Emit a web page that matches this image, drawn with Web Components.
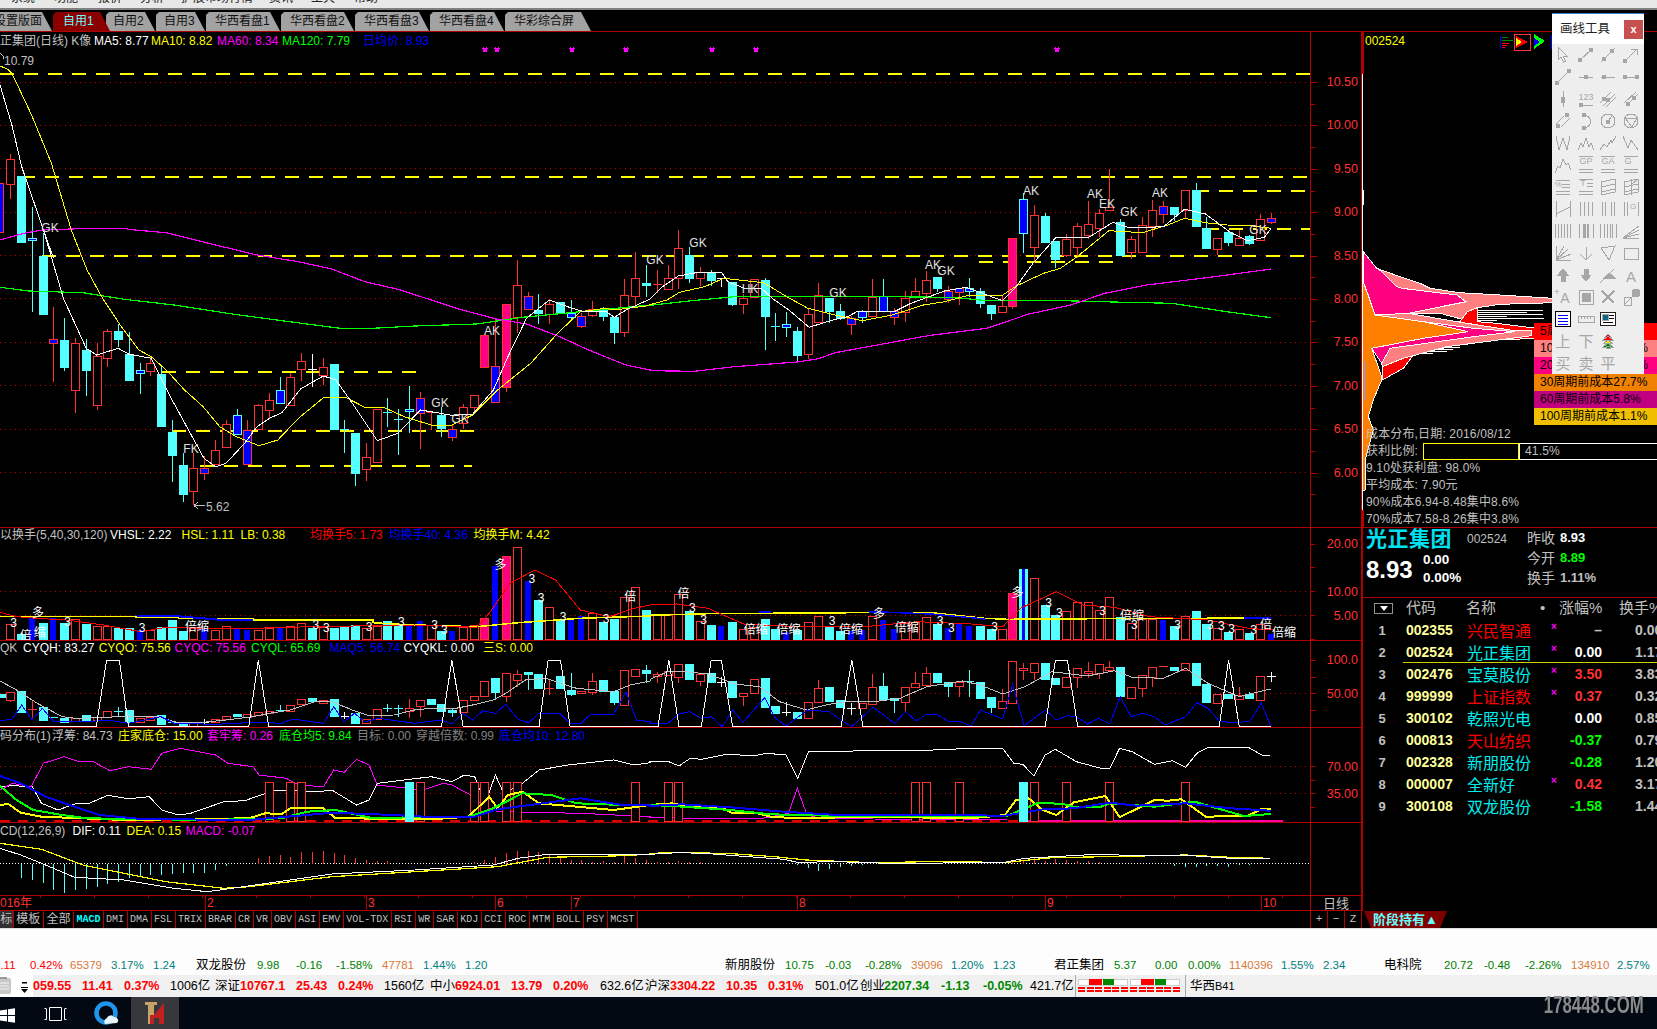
<!DOCTYPE html>
<html lang="zh">
<head>
<meta charset="utf-8">
<title>通达信 K线</title>
<style>
  html, body { margin: 0; padding: 0; background: #000; }
  body { font: 12px "Liberation Sans", "Noto Sans CJK SC", sans-serif; }
</style>
</head>
<body>
<tdx-app>
  <menu-strip></menu-strip>
  <tab-strip></tab-strip>
  <work-area>
    <div slot="left">
      <chart-pane name="main" top="32" h="496" ly="2">
        <lg-i w="94" c="#c0c0c0">正集团(日线) K像</lg-i>
        <lg-i w="57" c="#fff">MA5: 8.77</lg-i>
        <lg-i w="66" c="#ff0">MA10: 8.82</lg-i>
        <lg-i w="65" c="#f0f">MA60: 8.34</lg-i>
        <lg-i w="81" c="#0f0">MA120: 7.79</lg-i>
        <lg-i w="80" c="#00f">日均价: 8.93</lg-i>
      </chart-pane>
      <chart-pane name="vol" top="528" h="113" ly="0">
        <lg-i w="110" c="#c0c0c0">以换手(5,40,30,120)</lg-i>
        <lg-i w="71.6" c="#fff">VHSL: 2.22</lg-i>
        <lg-i w="59" c="#ff0">HSL: 1.11</lg-i>
        <lg-i w="69.5" c="#ff0">LB: 0.38</lg-i>
        <lg-i w="78.5" c="#f00">均换手5: 1.73</lg-i>
        <lg-i w="85" c="#00f">均换手40: 4.36</lg-i>
        <lg-i w="90" c="#ff0">均换手M: 4.42</lg-i>
      </chart-pane>
      <chart-pane name="qk" top="641" h="87" ly="0">
        <lg-i w="23" c="#c0c0c0">QK</lg-i>
        <lg-i w="75.7" c="#fff">CYQH: 83.27</lg-i>
        <lg-i w="75.8" c="#ff0">CYQO: 75.56</lg-i>
        <lg-i w="76.5" c="#f0f">CYQC: 75.56</lg-i>
        <lg-i w="78.6" c="#0f0">CYQL: 65.69</lg-i>
        <lg-i w="73.8" c="#00f">MAQ5: 56.74</lg-i>
        <lg-i w="79.6" c="#fff">CYQKL: 0.00</lg-i>
        <lg-i w="70" c="#ff0">三S: 0.00</lg-i>
      </chart-pane>
      <chart-pane name="chip" top="728" h="95" ly="1">
        <lg-i w="52" c="#c0c0c0">码分布(1)</lg-i>
        <lg-i w="66" c="#c0c0c0">浮筹: 84.73</lg-i>
        <lg-i w="89" c="#ff0">庄家底仓: 15.00</lg-i>
        <lg-i w="72" c="#f0f">套牢筹: 0.26</lg-i>
        <lg-i w="78" c="#0f0">底仓均5: 9.84</lg-i>
        <lg-i w="59" c="#808080">目标: 0.00</lg-i>
        <lg-i w="83" c="#808080">穿越倍数: 0.99</lg-i>
        <lg-i w="90" c="#00f">底仓均10: 12.80</lg-i>
      </chart-pane>
      <chart-pane name="macd" top="823" h="73" ly="1">
        <lg-i w="72.5" c="#c0c0c0">CD(12,26,9)</lg-i>
        <lg-i w="54" c="#fff">DIF: 0.11</lg-i>
        <lg-i w="59.2" c="#ff0">DEA: 0.15</lg-i>
        <lg-i w="90" c="#f0f">MACD: -0.07</lg-i>
      </chart-pane>
      <time-axis></time-axis>
      <formula-tabs></formula-tabs>
    </div>
    <div slot="right">
      <chip-panel></chip-panel>
      <quote-card></quote-card>
      <stock-list></stock-list>
      <hold-tab>阶段持有▲</hold-tab>
    </div>
  </work-area>
  <ticker-strip></ticker-strip>
  <status-strip></status-strip>
  <task-bar></task-bar>
  <draw-tools></draw-tools>
</tdx-app>

<script>
const FONT = '"Liberation Sans","Noto Sans CJK SC",sans-serif';
const LINE = '#b00000';
const RED = '#ff3232';
const CYAN = '#54ffff';

// zoom crop coords -> page coords
const pts = (sx, ox, oy, a) => {
  let s = '';
  for (let i = 0; i < a.length; i += 2) s += (ox + a[i] / sx).toFixed(1) + ',' + (oy + a[i + 1] / 3).toFixed(1) + ' ';
  return s;
};
const z1 = a => pts(2.53, 0, 0, a);
const z9 = a => pts(2.412, 0, 230, a);
const z10 = a => pts(2.376, 650, 160, a);
const z7 = a => pts(2.412, 0, 520, a);
const z8 = a => pts(2.24, 650, 520, a);
const poly = (p, c, w = 1) => `<polyline points="${p}" fill="none" stroke="${c}" stroke-width="${w}"/>`;
const cx = i => Math.round(10.3 + 10.775 * i);
const hl = (y, x1, x2, c, w, dash) => `<path d="M${x1} ${y}H${x2}" stroke="${c}" stroke-width="${w}" ${dash ? `stroke-dasharray="${dash}"` : ''} fill="none"/>`;
const dotted = (y, x2 = 1311) => hl(y + .5, 0, x2, '#c80000', 1, '1 4');
const label = (x, y, t, c = '#e0e0e0') => `<text x="${x.toFixed(1)}" y="${y.toFixed(1)}" fill="${c}" text-anchor="middle" dominant-baseline="central" font-size="12">${t}</text>`;
const axisText = (y, t) => `<text x="1358" y="${y}" fill="${RED}" text-anchor="end" dominant-baseline="central" font-size="12.5">${t}</text>`;

function candles(str, start, base) {
  return str.trim().split(/\s*,\s*/).map((e, k) => {
    const [t, a, b, hi, lo] = e.split(' ');
    const top = base + a / 3, bot = base + b / 3, h = hi ? base + hi / 3 : top, l = lo ? base + lo / 3 : bot;
    return candle(cx(start + k), t, top, bot, h, l);
  }).join('');
}
function candle(x, t, top, bot, h, l) {
  const c = { c: CYAN, B: CYAN, w: '#fff', r: RED, b: RED, p: RED }[t];
  const fill = { c: CYAN, B: '#00f', w: 'none', r: '#000', b: '#00f', p: '#ff0080' }[t];
  const px = x + .5;
  let s = `<path d="M${px} ${h}V${l}" stroke="${c}"/>`;
  top = Math.round(top) + .5; bot = Math.round(bot) + .5;
  if (bot - top < 2) s += `<path d="M${x - 4} ${top}h9" stroke="${t == 'c' || t == 'B' || t == 'w' ? c : RED}" stroke-width="1"/>`
    + (t == 'B' || t == 'b' ? `<rect x="${x - 2}" y="${top - 2}" width="5" height="4" fill="#00f"/>` : '');
  else s += `<rect x="${x - 4 + .5}" y="${top}" width="8" height="${bot - top}" fill="${fill}" stroke="${c}"/>`;
  return s;
}

const MAIN_HEAD =
  candle(-1, 'b', 183, 232, 183, 232) + candle(cx(0), 'r', 159, 184, 154, 199) +
  candle(cx(1), 'c', 176, 242, 176, 242) + candle(cx(2), 'B', 238, 240, 207, 312) + candle(cx(3), 'c', 256, 314, 233, 314);

const MAIN_1 = `b 328 338 232 455,c 330 411 265 422,r 340 479 325 548,c 360 420 328 497,r 378 524 340 540,r 304 383 297 410,c 304 327 282 350,c 372 450 306 452,B 420 430 400 492,r 400 422 380 438,
c 432 588 405 588,c 606 675 570 755,c 706 792 670 815,r 715 782 670 825,b 714 728 678 750,r 661 701 630 705,r 583 650 570 650,B 555 612 537 612,b 600 702 570 702,r 526 597 521 597,
r 511 539 490 568,B 480 520 442 520,r 442 524 430 524,r 394 416 368 452,w 418 418 372 470,r 412 434 384 465,c 402 596 402 596,c 598 598 570 670,c 609 728 609 768,r 682 716 640 752,
r 538 695 538 695,c 547 547 505 590,c 566 566 537 675,B 538 543 468 610,b 505 548 487 656,r 545 547 545 600,c 555 594 530 620,b 598 620 585 632,r 532 580 522 597,r 496 530 496 550,
p 316 410,b 408 515 265 515,p 223 470 223 485,r 166 261 90 310,b 198 236 186 238,c 240 248 192 282,r 222 251 208 282,c 216 250,B 250 262 210 270,b 258 287 250 295,
r 236 254 214 260,c 238 257 232 272,c 260 305 260 341,r 194 307 148 320,r 145 197 66 225,c 160 164 105 200`;
const MAIN_2 = `r 372 376 330 400,r 355 386 316 390,r 265 354 210 388,c 286 354 262 368,r 337 353 322 378,c 338 360 330 378,w 355 355 355 382,c 366 432 366 438,r 413 431 403 462,r 358 410 358 410,
c 360 468 354 570,c 497 497 460 542,B 492 500 456 530,c 513 585 500 610,r 463 581 448 597,r 406 485 370 490,c 414 453 414 490,c 453 474 432 480,b 474 491 468 525,B 453 470 450 490,
r 411 467 357 467,B 408 452 358 452,b 453 470 445 495,r 415 455 392 487,r 394 410 353 410,r 361 399 333 425,c 351 384 351 395,b 392 417 378 430,b 385 395 385 435,B 384 392 353 410,
c 392 429 385 444,c 435 459 435 480,r 439 455 405 455,p 235 437 235 447,B 118 220 100 278,r 166 260 135 310,c 168 245 158 245,c 243 297 243 323,r 237 286 222 290,r 199 261 188 295,
r 193 224 122 238,r 160 203 148 230,r 141 149 28 150,c 186 285 176 285,r 238 275 228 298,r 196 275 170 275,r 151 198 120 232,b 139 161 124 190,c 141 162 141 182,r 91 149 91 175,
c 91 197 70 202,c 205 263 172 265,r 235 268 235 286,c 216 245 216 258,r 235 256 210 258,c 228 248 225 255,r 176 239 162 239,b 175 185 160 192`;

const QK_1 = `r 515 540 515 545,c 513 575,r 568 570 540 595,c 560 600,c 592 595,c 595 607,r 593 602,c 586 600,r 590 600,r 572 590,c 573 573 562 590,c 570 605,r 595 605,r 590 600,c 584 612,c 605 605,c 610 620,r 610 620,w 607 607 597 615,r 596 605,
r 587 597,c 581 587,r 583 590,r 575 585,r 572 578,c 570 573 555 575,r 555 573,r 537 553,c 535 542,r 540 548,c 538 588,w 587 587 577 597,c 580 610,r 598 610,r 566 597,c 563 568 552 575,c 563 568 555 590,r 563 572 537 595,r 541 558 541 592,c 537 553,
c 553 572,c 570 575 565 590,r 541 577,r 527 540,r 484 527,c 473 515 473 540,r 460 527 460 545,r 463 480 450 500,c 457 462 457 510,c 462 503,r 505 507 480 525,c 468 505,c 510 523 460 527,r 513 520,r 484 517 460 525,c 480 512,c 513 545 513 555,r 449 555,r 447 467,c 449 460 435 490`;
const QK_2 = `r 462 468 455 490,r 452 466,r 433 472 433 490,c 432 478,r 462 482 462 498,c 460 485,w 487 487 470 500,c 483 530,r 520 528 520 557,r 478 520,c 475 560,c 558 578,w 577 577 545 588,c 576 593,r 547 595,r 505 547 480 547,c 502 542,c 540 562,w 565 565 550 585,r 550 563,
r 500 553 463 553,c 498 538 460 538,c 534 540 534 578,r 500 545 500 572,r 490 502 455 502,r 460 496 440 496,c 458 487,c 487 497 487 530,r 485 497 485 530,c 484 486 450 530,c 487 533,c 532 562 532 578,r 542 565 508 565,r 424 550,r 445 451 430 480,r 430 455 430 480,c 430 476,c 475 492,r 470 500,r 445 470 445 505,
r 452 458 425 475,r 432 458 432 478,r 442 450 423 450,c 442 527,r 502 533,r 466 505 466 530,r 442 470 442 500,r 438 441,c 440 450,r 430 450,c 430 495,c 492 545,r 522 548,c 522 533,r 524 538 502 538,c 522 533 515 538,r 468 540,w 468 468 455 487`;

// volume bar tops (i -> type top), 3x crop y
const VOL = `r 313,c 340,b 285,c 305,b 290,c 307,r 298,c 308,r 318,r 318,c 320,c 320,b 328,r 330,c 318,c 296,c 330,r 320,b 322,r 330,r 318,b 322,b 328,r 330,r 325,b 322,r 317,r 310,c 320,r 320,c 320,c 315,c 312,r 325,r 318,c 300,c 315,b 315,b 300,r 315,c 330,b 330,r 322,r 315,p 295,b 135,p 108,r 80,b 180,c 238,r 260,c 295,b 295,b 285,r 280,c 302,c 295,r 232,r 200,c 267,
r 285,r 285,r 222,c 270,r 303,c 312,b 316,c 303,r 328,r 320,c 295,c 325,b 333,c 327,r 305,r 288,c 315,c 330,b 330,b 326,r 288,b 297,b 325,r 310,r 305,r 292,c 310,b 322,b 310,b 315,c 315,c 325,r 328,p 220,B 144,r 175,c 252,c 282,r 273,r 245,r 245,r 270,r 232,c 288,r 310,r 297,r 297,b 298,c 315,r 288,c 270,c 308,r 325,c 333,r 328,c 335,r 313,b 340`;

const PANES = {
  main() {
    let s = '';
    [82, 125.5, 168, 212, 255.5, 298, 342, 385, 429, 472.5].forEach(y => s += dotted(Math.floor(y)));
    ['10.50', '10.00', '9.50', '9.00', '8.50', '8.00', '7.50', '7.00', '6.50', '6.00'].forEach((t, k) => {
      const y = 82 + k * 43.4;
      s += axisText(y, t) + hl(Math.round(y) + .5, 1311, 1317, LINE, 1) + hl(Math.round(y + 21.7) + .5, 1311, 1315, LINE, 1);
    });
    const d = '14 10';
    s += hl(74, 0, 1311, '#ff0', 2, d) + hl(177, 21, 1311, '#ff0', 2, d) + hl(256, 42, 1311, '#ff0', 2, d) +
      hl(191, 1195, 1311, '#ff0', 2, d) + hl(229, 1205, 1311, '#ff0', 2, d) + hl(262, 979, 1117, '#ff0', 2, d) +
      hl(372, 162, 419, '#ff0', 2, d) + hl(431, 172, 477, '#ff0', 2, d) + hl(466, 200, 472, '#ff0', 2, d);
    s += MAIN_HEAD + candles(MAIN_1, 4, 230) + candles(MAIN_2, 60, 160);
    s += poly(z9([0, 172, 70, 183, 200, 188, 300, 208, 420, 225, 560, 252, 680, 272, 820, 295, 900, 295, 1000, 288, 1150, 282, 1260, 262, 1400, 245, 1568, 225]) +
      z10([0, 436, 100, 422, 200, 410, 560, 410, 720, 412, 800, 422, 980, 422, 1130, 427, 1240, 430, 1370, 455, 1476, 473]), '#0f0', 1.2);
    s += poly(z1([0, 720, 60, 700, 107, 690, 230, 685, 310, 685]) +
      z9([325, 0, 400, 8, 520, 45, 620, 75, 720, 95, 800, 117, 880, 155, 960, 178, 1040, 210, 1100, 235, 1200, 268, 1270, 282, 1350, 320, 1420, 360, 1510, 405, 1568, 420]) +
      z10([0, 632, 105, 634, 200, 620, 350, 606, 400, 596, 440, 578, 570, 548, 660, 527, 800, 505, 900, 462, 1000, 435, 1080, 400, 1180, 375, 1330, 352, 1476, 327]), '#f0f', 1.2);
    s += poly(z1([0, 198, 20, 208, 30, 220, 80, 345, 130, 490]) +
      z9([172, 0, 210, 120, 245, 200, 290, 285, 335, 360, 365, 380, 405, 425, 445, 480, 490, 530, 530, 590, 570, 620, 625, 647, 670, 630, 720, 565, 780, 503, 835, 503, 880, 532, 925, 532, 975, 560, 1040, 585, 1090, 585, 1140, 555, 1200, 480, 1280, 400, 1345, 310, 1400, 245, 1460, 235, 1482, 240, 1559, 228]) +
      z10([0, 434, 40, 420, 70, 397, 130, 380, 175, 355, 270, 368, 325, 410, 375, 445, 440, 465, 505, 482, 575, 465, 650, 435, 700, 425, 760, 405, 838, 405, 870, 378, 935, 340, 975, 325, 1015, 290, 1090, 212, 1170, 218, 1230, 195, 1270, 175, 1320, 188, 1370, 195, 1420, 196, 1476, 205]), '#ff0');
    s += poly(z1([0, 255, 30, 375, 55, 500, 107, 680, 135, 775]) +
      z9([105, 0, 153, 205, 208, 355, 233, 375, 285, 355, 310, 372, 365, 385, 415, 510, 492, 685, 520, 710, 545, 700, 590, 640, 620, 590, 650, 565, 680, 548, 725, 477, 780, 438, 810, 450, 850, 520, 910, 632, 960, 610, 1014, 540, 1062, 550, 1090, 556, 1140, 553, 1190, 480, 1225, 380, 1270, 265, 1325, 210, 1380, 235, 1410, 245, 1460, 243, 1482, 262, 1510, 240, 1559, 212]) +
      z10([0, 418, 30, 380, 67, 348, 115, 337, 170, 337, 185, 365, 225, 385, 265, 385, 290, 415, 330, 450, 378, 502, 440, 478, 470, 470, 490, 456, 580, 455, 620, 430, 700, 393, 750, 382, 790, 400, 837, 422, 870, 380, 910, 310, 965, 232, 1040, 234, 1100, 187, 1140, 204, 1220, 200, 1270, 148, 1320, 162, 1380, 218, 1420, 242, 1460, 232, 1476, 205]), '#fff');
    [485, 497, 572, 626, 712, 756, 1057].forEach(x => s += `<path d="M${x - 2} 48l4 4M${x + 2} 48l-4 4" stroke="#f0f" stroke-width="1.5"/>`);
    [[50, 228, 'GK'], [191, 449, 'FK'], [440, 403, 'GK'], [460, 419, 'GK'], [492, 331, 'AK'], [655, 260, 'GK'], [698, 243, 'GK'], [750, 289, 'HK'], [838, 293, 'GK'], [933, 265, 'AK'], [946, 271, 'GK'], [1031, 191, 'AK'], [1095, 194, 'AK'], [1107, 204, 'EK'], [1129, 212, 'GK'], [1160, 193, 'AK'], [1258, 230, 'GK']]
      .forEach(l => s += label(l[0], l[1], l[2]));
    s += `<path d="M194 505.5h11M194 505.5l4-3M194 505.5l4 3" stroke="#c0c0c0" fill="none"/>` + `<text x="206" y="507" fill="#c0c0c0" dominant-baseline="central" font-size="12">5.62</text>`;
    s += `<path d="M0 53l3 3v3" stroke="#c0c0c0" fill="none"/><text x="4" y="61" fill="#c0c0c0" dominant-baseline="central" font-size="12">10.79</text>`;
    return s;
  },
  vol() {
    let s = dotted(591) + dotted(615);
    s += axisText(544, '20.00') + axisText(591.5, '10.00') + axisText(615.5, '5.00');
    [544, 567, 591, 615, 639].forEach(y => s += hl(y + .5, 1311, 1315, LINE, 1));
    VOL.trim().split(/\s*,\s*/).forEach((e, i) => {
      const [t, top] = e.split(' ');
      const x = cx(i), y = Math.round(520 + top / 3) + .5, h = 639.5 - y;
      if (t == 'c') s += `<rect x="${x - 4}" y="${y}" width="9" height="${h}" fill="${CYAN}"/>`;
      if (t == 'r') s += `<rect x="${x - 3.5}" y="${y}" width="8" height="${h}" fill="#000" stroke="${RED}"/>`;
      if (t == 'b') s += `<rect x="${x - 3}" y="${y}" width="6" height="${h}" fill="#00f"/>`;
      if (t == 'p') s += `<rect x="${x - 3.5}" y="${y}" width="8" height="${h}" fill="#ff0080" stroke="${RED}"/>`;
      if (t == 'B') s += `<rect x="${x - 4}" y="${y}" width="9" height="${h}" fill="${CYAN}"/><rect x="${x - 1}" y="${y}" width="3" height="${h}" fill="#00f"/>`;
    });
    s += poly(z7([0, 289, 325, 289, 330, 292, 430, 292, 430, 295, 610, 295, 610, 300, 900, 300, 900, 308, 980, 314, 1150, 320, 1250, 308, 1400, 295, 1568, 288]) + z8([0, 286, 130, 281, 460, 278, 630, 278, 750, 295, 800, 298, 1000, 296, 1390, 294]), '#ff0', 1.5);
    s += poly(z7([330, 289, 430, 289, 530, 299, 610, 299]), '#00f', 2) + poly(z8([245, 276, 270, 276]), '#00f', 2) + poly(z8([490, 276, 520, 276, 630, 282, 750, 297]), '#00f', 1.5) + poly(z8([1330, 294, 1390, 294]), '#00f', 2);
    s += poly(z7([0, 277, 40, 290, 90, 295, 160, 300, 250, 315, 340, 335, 400, 322, 550, 327, 750, 320, 1000, 315, 1150, 322, 1180, 280, 1230, 190, 1290, 150, 1340, 180, 1400, 270, 1470, 290, 1530, 265, 1568, 255]) +
      z8([0, 255, 60, 252, 130, 265, 210, 312, 330, 320, 480, 320, 600, 305, 720, 312, 790, 320, 830, 265, 910, 215, 970, 255, 1040, 262, 1120, 290, 1250, 300, 1340, 325, 1395, 330]), '#f00');
    const y = v => 520 + v / 3;
    [[33, 310, '3'], [92, 278, '多'], [62, 347, '倍'], [96, 340, '缩'], [163, 305, '3'], [343, 325, '3'], [475, 322, '倍缩'], [762, 315, '3'], [787, 325, '3'], [890, 322, '3'], [968, 305, '3'], [1048, 315, '3'], [1072, 330, '3'], [1207, 135, '多'], [1283, 178, '3'], [1305, 235, '3'], [1358, 290, '3'], [1462, 297, '3'], [1520, 232, '倍']]
      .forEach(l => s += label(l[0] / 2.412, y(l[1]), l[2], '#fff'));
    [[75, 222, '倍'], [95, 265, '3'], [120, 300, '3'], [237, 330, '倍缩'], [310, 330, '倍缩'], [408, 302, '3'], [450, 330, '倍缩'], [513, 282, '多'], [575, 325, '倍缩'], [650, 303, '3'], [675, 325, '3'], [772, 320, '3'], [823, 218, '多'], [893, 250, '3'], [917, 278, '3'], [1014, 272, '3'], [1080, 288, '倍缩'], [1085, 315, '3'], [1182, 315, '3'], [1255, 315, '3'], [1280, 318, '3'], [1303, 328, '3'], [1352, 330, '3'], [1380, 315, '倍'], [1420, 340, '倍缩']]
      .forEach(l => s += label(650 + l[0] / 2.24, y(l[1]), l[2], '#fff'));
    return s;
  },
  qk() {
    let s = dotted(693);
    s += axisText(660, '100.0') + axisText(693.5, '50.00');
    [660, 677, 693, 710].forEach(y => s += hl(y + .5, 1311, 1316, LINE, 1));
    s += candle(2, 'c', 694, 697, 694, 697) + candles(QK_1, 0, 520) + candles(QK_2, 60, 520);
    s += poly(z7([0, 483, 40, 510, 90, 550, 150, 590, 190, 596, 240, 592, 300, 590, 380, 590, 430, 608, 490, 607, 545, 600, 610, 590, 650, 580, 700, 570, 760, 545, 800, 545, 850, 570, 890, 587, 950, 585, 1000, 570, 1040, 565, 1100, 565, 1140, 555, 1190, 540, 1220, 520, 1270, 478, 1320, 476, 1390, 505, 1480, 515, 1520, 495, 1568, 483]) +
      z8([0, 478, 40, 455, 80, 455, 130, 462, 190, 492, 245, 500, 290, 545, 350, 570, 400, 553, 440, 545, 500, 545, 560, 535, 620, 500, 700, 483, 740, 495, 790, 522, 840, 500, 900, 455, 980, 468, 1040, 452, 1080, 472, 1150, 475, 1200, 445, 1250, 490, 1320, 530, 1390, 507]), '#c0c0c0');
    s += poly(z7([0, 603, 30, 597, 52, 555, 78, 600, 102, 565, 130, 605, 208, 605, 260, 600, 310, 610, 388, 590, 420, 610, 520, 613, 620, 607, 680, 610, 705, 597, 780, 610, 805, 560, 830, 605, 855, 580, 880, 605, 915, 595, 1000, 610, 1065, 600, 1090, 612, 1117, 580, 1140, 600, 1165, 572, 1195, 580, 1220, 553, 1250, 598, 1275, 608, 1300, 580, 1350, 580, 1375, 610, 1400, 612, 1425, 582, 1480, 582, 1510, 515, 1535, 600, 1568, 605]) +
      z8([0, 610, 40, 610, 65, 582, 88, 575, 115, 595, 137, 590, 162, 620, 185, 570, 208, 607, 257, 533, 281, 595, 305, 618, 353, 570, 402, 575, 428, 600, 452, 620, 500, 562, 548, 610, 572, 575, 596, 603, 620, 582, 645, 585, 670, 605, 695, 605, 720, 618, 740, 570, 790, 597, 812, 493, 838, 617, 885, 570, 910, 600, 935, 587, 955, 590, 980, 612, 1005, 595, 1030, 612, 1053, 530, 1078, 590, 1102, 580, 1130, 590, 1154, 615, 1200, 590, 1225, 548, 1250, 565, 1275, 603, 1296, 607, 1320, 607, 1345, 603, 1369, 548, 1390, 617]), '#00f');
    s += poly(z7([0, 620, 232, 620, 257, 420, 288, 420, 310, 620, 600, 620, 623, 420, 648, 620, 1065, 620, 1090, 420, 1117, 620, 1300, 620, 1322, 420, 1352, 420, 1375, 620, 1568, 620]) +
      z8([0, 620, 18, 620, 42, 420, 65, 620, 115, 620, 137, 420, 160, 420, 185, 620, 428, 620, 452, 420, 477, 620, 885, 620, 908, 420, 935, 420, 958, 620, 1275, 620, 1296, 420, 1320, 620, 1390, 620]), '#fff');
    return s;
  },
  chip() {
    let s = dotted(766) + dotted(793);
    s += axisText(766.7, '70.00') + axisText(793.5, '35.00');
    [766, 780, 793, 807].forEach(y => s += hl(y + .5, 1311, 1315, LINE, 1));
    s += poly(z7([0, 800, 30, 797, 78, 800, 100, 850, 140, 870, 180, 852, 215, 850, 260, 826, 310, 836, 360, 830, 390, 870, 430, 885, 460, 880, 540, 845, 590, 842, 660, 812, 700, 812, 770, 815, 800, 810, 860, 855, 890, 840, 910, 790, 1040, 770, 1090, 785, 1120, 765, 1145, 770, 1170, 850, 1195, 765, 1215, 820, 1260, 790, 1300, 750, 1370, 735, 1480, 720, 1530, 735, 1568, 728]) +
      z8([0, 725, 40, 724, 65, 738, 90, 715, 115, 718, 175, 702, 230, 708, 260, 700, 305, 705, 331, 775, 355, 695, 500, 692, 600, 692, 720, 685, 790, 685, 815, 730, 835, 733, 860, 768, 885, 705, 908, 688, 955, 725, 1010, 745, 1030, 745, 1052, 685, 1080, 695, 1130, 733, 1170, 722, 1200, 742, 1225, 700, 1250, 682, 1340, 682, 1370, 705, 1390, 706]), '#fff');
    s += poly(z7([0, 810, 30, 790, 75, 800, 105, 730, 155, 710, 190, 725, 225, 725, 265, 752, 310, 740, 365, 748, 390, 700, 435, 685, 520, 705, 550, 730, 610, 740, 625, 765, 690, 775, 720, 795, 780, 800, 805, 750, 830, 757, 860, 718, 890, 735, 910, 795, 1020, 810, 1070, 790, 1090, 795, 1135, 825, 1170, 860, 1200, 875, 1400, 880, 1568, 890]) +
      z8([0, 892, 75, 895, 245, 897, 310, 880, 330, 805, 352, 885, 380, 895, 500, 897, 800, 900]), '#f0f');
    s += hl(820.5, 0, 1023, '#00ffff', 1, '6 12') ;
    s += hl(821, 0, 1030, '#e00000', 1.5, '10 8');
    s += hl(820.5, 1023, 1283, '#ff00a0', 2);
    [24, 26, 27, 38, 43, 44, 46, 47, 58, 61, 62, 84, 85, 88, 95, 98, 102, 109].forEach(i => s += `<rect x="${cx(i) - 3.5}" y="782.5" width="8" height="39" fill="#000" stroke="${RED}"/>`);
    s += poly(z7([0, 855, 20, 852, 50, 878, 100, 890, 300, 900, 600, 895, 640, 880, 680, 882, 700, 865, 780, 865, 810, 895, 1050, 897, 1130, 890, 1180, 830, 1200, 865, 1225, 825, 1260, 815, 1300, 850, 1480, 870, 1568, 855]) +
      z8([50, 850, 90, 862, 160, 862, 185, 880, 240, 880, 270, 890, 330, 895, 500, 890, 720, 895, 795, 885, 820, 840, 848, 835, 880, 870, 910, 885, 950, 847, 1020, 828, 1052, 892, 1130, 840, 1160, 842, 1190, 838, 1245, 890, 1340, 887, 1370, 867, 1392, 867]), '#ff0', 2);
    s += poly(z7([0, 798, 40, 840, 80, 870, 150, 885, 210, 895, 500, 900, 680, 895, 740, 875, 810, 870, 900, 895, 1040, 890, 1130, 890, 1180, 870, 1205, 855, 1260, 820, 1330, 825, 1390, 850, 1500, 855, 1568, 855]) +
      z8([50, 858, 180, 870, 270, 883, 400, 887, 700, 888, 800, 888, 870, 848, 925, 852, 950, 860, 1010, 860, 1030, 850, 1130, 860, 1220, 845, 1330, 888, 1392, 882]), '#0f0', 2);
    s += poly(z7([0, 768, 50, 790, 110, 830, 180, 860, 240, 885, 340, 897, 600, 900, 740, 885, 800, 878, 950, 885, 1050, 892, 1140, 892, 1200, 868, 1260, 858, 1400, 835, 1500, 855, 1568, 855]) +
      z8([0, 858, 70, 853, 180, 862, 300, 875, 420, 885, 720, 885, 790, 888, 880, 868, 950, 865, 1030, 848, 1090, 857, 1200, 850, 1300, 865, 1390, 872]), '#00f', 2);
    [37, 94].forEach(i => s += `<rect x="${cx(i) - 4}" y="782" width="9" height="40" fill="${CYAN}"/>`);
    return s;
  },
  macd() {
    let s = hl(863.5, 0, 1311, '#fff', 1, '1 2');
    const bars = [[1, 1075], [2, 1080], [3, 1090], [4, 1110], [5, 1118], [6, 1110], [7, 1108], [8, 1100], [9, 1092], [10, 1085], [11, 1075], [12, 1070], [13, 1065], [14, 1065], [15, 1062], [16, 1060], [17, 1060], [18, 1058], [19, 1050], [20, 1038],
      [23, 1015], [24, 1008], [25, 1005], [26, 1012], [27, 995], [28, 995], [29, 992], [30, 1000], [31, 1005], [32, 1015], [33, 1020], [34, 1022], [35, 1024], [43, 1027], [44, 1020], [45, 1010], [46, 1000], [47, 992], [48, 992], [49, 995], [50, 1005], [51, 1015], [52, 1020], [53, 1020], [54, 1025], [55, 1022], [56, 1025], [57, 1008], [58, 1015], [59, 1020], [60, 1025], [61, 1027], [62, 1022], [63, 1025], [64, 1027],
      [71, 1033], [72, 1033], [73, 1035], [74, 1045], [75, 1052], [76, 1048], [77, 1040], [78, 1037], [79, 1035], [80, 1033], [93, 1024], [94, 1020], [95, 1015], [96, 1024], [97, 1018], [98, 1020], [99, 1022], [100, 1022], [101, 1025],
      [108, 1037], [109, 1040], [110, 1040], [111, 1038], [112, 1038], [113, 1040], [114, 1035], [115, 1035]];
    bars.forEach(b => s += `<path d="M${cx(b[0]) + .5} 863.5V${520 + b[1] / 3}" stroke="${b[1] > 1030 ? CYAN : RED}"/>`);
    s += poly(z7([0, 970, 100, 988, 200, 1035, 400, 1085, 540, 1105, 600, 1100, 800, 1070, 1000, 1055, 1200, 1040, 1320, 1012, 1480, 1008, 1568, 1003]) +
      z8([0, 1000, 60, 998, 170, 1000, 280, 1010, 350, 1020, 500, 1028, 620, 1025, 800, 1027, 900, 1013, 1100, 1008, 1200, 1005, 1300, 1012, 1390, 1015]), '#ff0', 1.2);
    s += poly(z7([0, 985, 50, 1005, 100, 1030, 180, 1072, 300, 1080, 420, 1105, 500, 1115, 560, 1105, 800, 1062, 1000, 1050, 1190, 1035, 1250, 1015, 1320, 1003, 1568, 1003]) +
      z8([0, 1003, 60, 998, 120, 1000, 200, 1008, 300, 1018, 330, 1027, 420, 1025, 530, 1030, 790, 1028, 840, 1015, 1000, 1003, 1100, 1007, 1190, 1005, 1300, 1015, 1390, 1017]), '#fff', 1);
    return s;
  }
};

class TdxApp extends HTMLElement {
  constructor() {
    super();
    this.attachShadow({ mode: 'open' });
    this.shadowRoot.innerHTML = `<style>
      :host { display: block; position: relative; width: 1657px; height: 1029px; overflow: hidden; background: #000; }
    </style><slot></slot>`;
  }
}

class MenuStrip extends HTMLElement {
  constructor() {
    super();
    this.attachShadow({ mode: 'open' });
    const items = [['系统', 43], ['功能', 44], ['报价', 42], ['分析', 41], ['扩展市场行情', 88], ['资讯', 42], ['工具', 43], ['帮助', 40]];
    this.shadowRoot.innerHTML = `<style>
      :host { display: block; height: 10px; overflow: hidden; background: #e8e8e8; box-sizing: border-box; border-bottom: 2px solid #808080; }
      div { display: flex; padding-left: 11px; margin-top: -9px; font: 12px/14px ${FONT}; color: #222; }
      span { flex: none; }
    </style><div>${items.map(i => `<span style="width:${i[1]}px">${i[0]}</span>`).join('')}</div>`;
  }
}

class TabStrip extends HTMLElement {
  constructor() {
    super();
    this.attachShadow({ mode: 'open' });
    const tabs = [['设置版面', 62, 4], ['自用1', 57, 10], ['自用2', 49, 7], ['自用3', 49, 8], ['华西看盘1', 74, 9], ['华西看盘2', 73, 9], ['华西看盘3', 74, 9], ['华西看盘4', 74, 9], ['华彩综合屏', 86, 9]];
    this.shadowRoot.innerHTML = `<style>
      :host { display: block; height: 22px; box-sizing: border-box; border-bottom: 1px solid ${LINE}; }
      nav { display: flex; height: 21px; align-items: flex-end; margin-left: -10px; gap: 1px; }
      a { flex: none; box-sizing: border-box; height: 19px; font: 12px/19px ${FONT}; color: #111; background: #a2a2a2; white-space: nowrap;
          clip-path: polygon(0 100%, 0 3px, 3px 0, calc(100% - 10px) 0, 100% 100%); }
      a.on { background: #8a0000; color: #66ffff; position: relative; z-index: 1; margin-right: -5px; }
    </style><nav>${tabs.map((t, k) => `<a class="${k == 1 ? 'on' : ''}" style="width:${t[1]}px;padding-left:${t[2]}px">${t[0]}</a>`).join('')}</nav>`;
  }
}

class WorkArea extends HTMLElement {
  constructor() {
    super();
    this.attachShadow({ mode: 'open' });
    this.shadowRoot.innerHTML = `<style>
      :host { display: grid; grid-template-columns: 1362px 295px; height: 896px; }
    </style><slot name="left"></slot><slot name="right"></slot>`;
  }
}

class LegendItem extends HTMLElement {
  constructor() {
    super();
    this.attachShadow({ mode: 'open' });
    this.shadowRoot.innerHTML = `<style>:host { display: block; flex: none; white-space: nowrap; }</style><slot></slot>`;
  }
  connectedCallback() {
    this.style.width = this.getAttribute('w') + 'px';
    this.style.color = this.getAttribute('c');
  }
}

class ChartPane extends HTMLElement {
  constructor() {
    super();
    this.attachShadow({ mode: 'open' });
  }
  connectedCallback() {
    const name = this.getAttribute('name');
    const top = +this.getAttribute('top'), h = +this.getAttribute('h');
    this.shadowRoot.innerHTML = `<style>
      :host { display: block; position: relative; height: ${h}px; overflow: hidden; }
      svg { display: block; font-family: ${FONT}; }
      .legend { position: absolute; left: 0; top: ${this.getAttribute('ly')}px; display: flex; font: 12px/14px ${FONT}; }
    </style>
    <svg width="1362" height="${h}" viewBox="0 ${top} 1362 ${h}" shape-rendering="crispEdges">
      <rect x="0" y="${top}" width="1362" height="${h}" fill="#000"/>
      ${PANES[name]()}
      <path d="M0 ${top + h - .5}H1362M1310.5 ${top}V${top + h}M1361.5 ${top}V${top + h}" stroke="${LINE}" fill="none"/>
    </svg>
    <div class="legend"><slot></slot></div>`;
  }
}

class TimeAxis extends HTMLElement {
  constructor() {
    super();
    this.attachShadow({ mode: 'open' });
    const marks = [[205, '2'], [366, '3'], [495, '6'], [571, '7'], [797, '8'], [1045, '9'], [1261, '10']];
    let s = `<text x="0" y="7" fill="${RED}" dominant-baseline="central" font-size="12">016年</text>`;
    marks.forEach(m => s += `<path d="M${m[0] + .5} 0V15" stroke="${LINE}"/><text x="${m[0] + 2}" y="7" fill="${RED}" dominant-baseline="central" font-size="12">${m[1]}</text>`);
    for (let x = 40; x < 1300; x += 54) s += `<path d="M${x + .5} 0v2" stroke="${LINE}"/>`;
    s += `<path d="M0 14.5H1362M1310.5 0V15M1361.5 0V15" stroke="${LINE}"/>`;
    s += `<text x="1336" y="7" fill="#c0c0c0" text-anchor="middle" dominant-baseline="central" font-size="13">日线</text>`;
    this.shadowRoot.innerHTML = `<style>
      :host { display: block; height: 15px; }
      svg { display: block; font-family: ${FONT}; }
    </style><svg width="1362" height="15" shape-rendering="crispEdges">${s}</svg>`;
  }
}

class FormulaTabs extends HTMLElement {
  constructor() {
    super();
    this.attachShadow({ mode: 'open' });
    const names = ['DMI', 'DMA', 'FSL', 'TRIX', 'BRAR', 'CR', 'VR', 'OBV', 'ASI', 'EMV', 'VOL-TDX', 'RSI', 'WR', 'SAR', 'KDJ', 'CCI', 'ROC', 'MTM', 'BOLL', 'PSY', 'MCST'];
    this.shadowRoot.innerHTML = `<style>
      :host { display: flex; height: 17px; color: #c0c0c0; }
      div { display: flex; flex: 1; height: 17px; min-width: 0; }
      span { flex: none; box-sizing: content-box; padding: 0 2.500px; border-right: 1px solid ${LINE}; font: 10px/17px "Liberation Mono", monospace; }
      .cn { box-sizing: border-box; font: 12px/17px ${FONT}; padding: 0; text-align: center; }
      .sel { box-sizing: border-box; color: #00ffff; font-weight: bold; }
      .dark { background: #303030; }
      aside { display: flex; border-left: 1px solid ${LINE}; border-right: 1px solid ${LINE}; flex: none; width: 50px; }
      aside b { flex: 1; text-align: center; font: 11px/17px "Liberation Mono", monospace; border-right: 1px solid ${LINE}; }
      aside b:last-child { border: 0; }
    </style>
    <div><span class="cn dark" style="width:13.500px">标</span><span class="cn" style="width:30.500px">模板</span><span class="cn" style="width:30px">全部</span><span class="sel" style="width:29.500px">MACD</span>${names.map(n => `<span>${n}</span>`).join('')}</div>
    <aside><b>+</b><b>−</b><b>Z</b></aside>`;
  }
}

class ChipPanel extends HTMLElement {
  constructor() {
    super();
    this.attachShadow({ mode: 'open' });
    const z3 = a => pts(3, 1340, 270, a);
    const shape = (a, c) => `<polygon points="${z3(a)}" fill="${c}" stroke="#fff"/>`;
    let combs = '';
    [122, 128, 134, 140, 146, 152].forEach((y, k) => combs += poly(z3([412, y, [610, 560, 610, 500, 612, 470][k], y]), '#fff', 1));
    [232, 238, 244, 250].forEach((y, k) => combs += poly(z3([[320, 290, 270, 240][k], y, [360, 340, 320, 280][k], y]), '#fff', 1));
    const svg = shape([70, -55, 110, -5, 180, 20, 240, 40, 270, 55, 360, 68, 480, 75, 640, 85, 640, 98, 480, 103, 412, 113, 412, 160, 300, 130, 100, 130], '#ff8080') +
      shape([360, 155, 382, 125, 412, 113, 412, 155, 470, 160, 590, 175, 590, 205, 350, 215, 320, 232, 220, 255, 190, 295, 127, 330, 127, 280], '#ff0000') +
      shape([105, 135, 205, 130, 350, 155, 510, 180, 575, 180, 575, 197, 320, 230, 190, 265, 127, 290, 120, 250], '#ff8080') +
      shape([70, -55, 110, -5, 125, 5, 170, 50, 185, 55, 350, 75, 378, 95, 205, 130, 105, 135, 90, 90, 70, 35], '#ff0080') +
      shape([105, 135, 250, 155, 400, 175, 525, 185, 400, 200, 150, 235, 125, 280, 95, 235], '#ff0080') +
      shape([68, 30, 105, 135, 250, 155, 385, 185, 250, 205, 95, 235, 125, 320, 125, 330, 100, 390, 85, 440, 100, 480, 78, 560, 75, 660, 68, 660], '#ff8000') +
      combs;
    const icons = `<path d="M1500.5 36V49" stroke="#00f"/><path d="M1502 37h6v1h-6zM1502 40h11v1h-11z" fill="#080"/><path d="M1502 43h7v1h-7zM1502 45h5v1h-5zM1502 47h3v1h-3z" fill="#f00"/>
      <rect x="1514.5" y="34.5" width="16" height="16" fill="none" stroke="#ff3232"/><path d="M1516 36L1528 42L1516 48z" fill="#f00"/><path d="M1516 38L1522 42L1516 46z" fill="#ff0"/>
      <path d="M1534 34L1545 41L1534 49z" fill="#0f0"/><path d="M1534 38L1540 42L1534 46z" fill="#00f"/><rect x="1551" y="35" width="2" height="14" fill="#00f"/>`;
    const stack = [['#ff0000', '5周', ''], ['#ff8080', '10', '%'], ['#ff0080', '20', '%'], ['#f08000', '30周期前成本27.7%', ''], ['#c00080', '60周期前成本5.8%', ''], ['#f0c000', '100周期前成本1.1%', '']];
    this.shadowRoot.innerHTML = `<style>
      :host { display: block; position: relative; height: 496px; overflow: hidden; font: 12px/17px ${FONT}; color: #c0c0c0; }
      svg { display: block; font-family: ${FONT}; }
      .stack { position: absolute; right: 0; top: 291px; width: 123px; color: #000; }
      .stack div { display: flex; justify-content: space-between; height: 17px; padding: 0 9px 0 6px; }
      .notes { position: absolute; left: 4px; top: 394px; right: 0; white-space: nowrap; letter-spacing: .15px; }
      .notes div { height: 17px; }
      .ratio { display: flex; }
      .ratio b { font-weight: normal; width: 57px; flex: none; }
      .ratio i { flex: none; width: 94px; height: 15px; border: 1px solid #ff0; }
      .ratio u { flex: 1; height: 15px; border: 1px solid #fff; border-width: 1px 0 1px 1px; text-decoration: none; padding-left: 5px; line-height: 15px; }
    </style>
    <svg width="295" height="496" viewBox="1362 32 295 496" shape-rendering="crispEdges">
      <path d="M1362.5 32V74" stroke="${LINE}" stroke-width="2"/><path d="M1362.5 74V510" stroke="#fff"/><path d="M1362 190h2v15h-2z" fill="#fff"/>
      <path d="M1362.5 510V528" stroke="#c00000" stroke-width="2"/>
      ${svg}
      <path d="M1364.5 362V400" stroke="#9090ff"/>
      <text x="1365" y="41" fill="#ff0" dominant-baseline="central" font-size="12">002524</text>
      ${icons}
      <path d="M1362 527.5H1657" stroke="${LINE}"/>
    </svg>
    <div class="stack">${stack.map(s => `<div style="background:${s[0]}"><span>${s[1]}</span><span>${s[2]}</span></div>`).join('')}</div>
    <div class="notes">
      <div>成本分布,日期: 2016/08/12</div>
      <div class="ratio"><b>获利比例:</b><i></i><u>41.5%</u></div>
      <div>9.10处获利盘: 98.0%</div>
      <div>平均成本: 7.90元</div>
      <div>90%成本6.94-8.48集中8.6%</div>
      <div>70%成本7.58-8.26集中3.8%</div>
    </div>`;
  }
}

class QuoteCard extends HTMLElement {
  constructor() {
    super();
    this.attachShadow({ mode: 'open' });
    this.shadowRoot.innerHTML = `<style>
      :host { display: flex; height: 70px; box-sizing: border-box; border-left: 1px solid ${LINE}; border-bottom: 1px solid ${LINE}; padding-left: 3px; font-family: ${FONT}; color: #c0c0c0; }
      .a { width: 101px; flex: none; margin-top: -1px; }
      .name { font: bold 21px/24px ${FONT}; color: #00e0f0; height: 25px; letter-spacing: .5px; white-space: nowrap; }
      .price { display: flex; }
      .big { font: bold 24px/30px ${FONT}; color: #fff; width: 57px; padding-top: 3px; flex: none; }
      .chg { font: bold 13.500px/18px ${FONT}; color: #fff; margin-top: -1px; }
      .code { width: 60px; flex: none; font-size: 12px; line-height: 20px; padding-top: 1px; }
      .r div { height: 20px; display: flex; align-items: center; font-size: 14px; }
      .r { margin-top: -1px; }
      .r b { font-size: 13px; margin-left: 5px; }
    </style>
    <div class="a"><div class="name">光正集团</div><div class="price"><div class="big">8.93</div><div class="chg"><div>0.00</div><div>0.00%</div></div></div></div>
    <div class="code">002524</div>
    <div class="r"><div>昨收<b style="color:#fff">8.93</b></div><div>今开<b style="color:#0f0">8.89</b></div><div>换手<b>1.11%</b></div></div>`;
  }
}

class StockList extends HTMLElement {
  constructor() {
    super();
    this.attachShadow({ mode: 'open' });
    const rows = [
      ['1', '002355', '兴民智通', '#f00', 1, '–', '#c0c0c0', '0.00'],
      ['2', '002524', '光正集团', '#0ee', 1, '0.00', '#fff', '1.17'],
      ['3', '002476', '宝莫股份', '#0ee', 1, '3.50', RED, '3.83'],
      ['4', '999999', '上证指数', '#f00', 1, '0.37', RED, '0.32'],
      ['5', '300102', '乾照光电', '#0ee', 0, '0.00', '#fff', '0.85'],
      ['6', '000813', '天山纺织', '#f00', 0, '-0.37', '#0f0', '0.79'],
      ['7', '002328', '新朋股份', '#0ee', 0, '-0.28', '#0f0', '1.20'],
      ['8', '000007', '全新好', '#0ee', 1, '0.42', RED, '3.17'],
      ['9', '300108', '双龙股份', '#0ee', 0, '-1.58', '#0f0', '1.44']
    ];
    const grid = '40px 64px 82px 14px 40px 55px';
    this.shadowRoot.innerHTML = `<style>
      :host { display: block; height: 313px; overflow: hidden; box-sizing: border-box; border-left: 1px solid ${LINE}; font-family: ${FONT}; color: #c0c0c0; }
      .h, .row { display: grid; grid-template-columns: ${grid}; margin-left: -1px; align-items: center; }
      .h { height: 20px; font-size: 15px; line-height: 20px; white-space: nowrap; }
      .drop { width: 17px; height: 9px; border: 1px solid #909090; margin-left: 12px; display: flex; align-items: center; justify-content: center; }
      .drop::after { content: ""; border: 4px solid transparent; border-top: 5px solid #fff; border-bottom: 0; }
      .row { height: 22px; position: relative; white-space: nowrap; }
      .row.sel::after { content: ""; position: absolute; left: 41px; right: 0; bottom: -1px; height: 1px; background: #d0d000; }
      .no { text-align: center; font: bold 13px ${FONT}; }
      .code { padding-left: 4px; font: bold 14px ${FONT}; color: #ffff9a; }
      .name { font-size: 16px; padding-left: 1px; }
      .mk { color: #f0f; font: bold 10px/10px ${FONT}; text-align: center; margin-top: -6px; padding-right: 2px; }
      .chg { text-align: right; font: bold 14px ${FONT}; }
      .hand { padding-left: 33px; font: bold 14px ${FONT}; }
    </style>
    <div class="h"><span class="drop"></span><span style="padding-left:4px">代码</span><span>名称</span><span style="margin-left:-8px">•</span><span style="margin-left:-3px">涨幅%</span><span style="padding-left:17px">换手%</span></div>
    ${rows.map((r, k) => `<div class="row ${k == 1 ? 'sel' : ''}"><span class="no">${r[0]}</span><span class="code">${r[1]}</span><span class="name" style="color:${r[3]}">${r[2]}</span><span class="mk">${r[4] ? '×' : ''}</span><span class="chg" style="color:${r[6]}">${r[5]}</span><span class="hand">${r[7]}</span></div>`).join('')}`;
  }
}

class HoldTab extends HTMLElement {
  constructor() {
    super();
    this.attachShadow({ mode: 'open' });
    this.shadowRoot.innerHTML = `<style>
      :host { display: block; height: 17px; }
      div { margin-left: 2px; width: 83px; height: 17px; box-sizing: border-box; padding-left: 9px; background: #800000; color: #66ffff; font: bold 13px/17px ${FONT}; white-space: nowrap;
            clip-path: polygon(0 0, 100% 0, calc(100% - 7px) 100%, 7px 100%); }
    </style><div><slot></slot></div>`;
  }
}

// one row of quote cells: [text, x, colour, bold]; each cell runs to the next cell's x
function cellRow(cells, endX) {
  return cells.map((c, k) => {
    const next = k + 1 < cells.length ? cells[k + 1][1] : endX;
    return `<span style="width:${next - c[1]}px;color:${c[2]};${c[3] ? 'font-weight:bold' : ''}">${c[0]}</span>`;
  }).join('');
}

class TickerStrip extends HTMLElement {
  constructor() {
    super();
    this.attachShadow({ mode: 'open' });
    const R = '#ff0000', G = '#008000', O = '#d87a3c', T = '#008080', N = '#000';
    const c = [['0.11', -6, R], ['0.42%', 30, R], ['65379', 70, O], ['3.17%', 111, T], ['1.24', 153, T],
      ['双龙股份', 196, N], ['9.98', 257, G], ['-0.16', 296, G], ['-1.58%', 336, G], ['47781', 382, O], ['1.44%', 423, T], ['1.20', 465, T],
      ['新朋股份', 725, N], ['10.75', 785, G], ['-0.03', 825, G], ['-0.28%', 865, G], ['39096', 911, O], ['1.20%', 951, T], ['1.23', 993, T],
      ['君正集团', 1054, N], ['5.37', 1114, G], ['0.00', 1155, G], ['0.00%', 1188, G], ['1140396', 1229, O], ['1.55%', 1281, T], ['2.34', 1323, T],
      ['电科院', 1384, N], ['20.72', 1444, G], ['-0.48', 1484, G], ['-2.26%', 1525, G], ['134910', 1571, O], ['2.57%', 1617, T]];
    this.shadowRoot.innerHTML = `<style>
      :host { display: flex; height: 47px; box-sizing: border-box; background: #fdfdfd; border-top: 1px solid #ddd; padding-top: 29px; font: 11.500px/14px ${FONT}; white-space: nowrap; overflow: hidden; }
      span { flex: none; }
      span:first-of-type { margin-left: -6px; }
      span:nth-of-type(6), span:nth-of-type(13), span:nth-of-type(20), span:nth-of-type(27) { font-size: 12.500px; }
    </style>${cellRow(c, 1657)}`;
  }
}

class StatusStrip extends HTMLElement {
  constructor() {
    super();
    this.attachShadow({ mode: 'open' });
    const R = '#f00', G = '#080', K = '#000';
    const c = [['059.55', 33, R, 1], ['11.41', 82, R, 1], ['0.37%', 124, R, 1], ['1006亿', 170, K], ['深证', 215, K], ['10767.1', 240, R, 1], ['25.43', 296, R, 1], ['0.24%', 338, R, 1], ['1560亿', 384, K], ['中小', 430, K], ['6924.01', 455, R, 1], ['13.79', 511, R, 1], ['0.20%', 553, R, 1], ['632.6亿', 600, K], ['沪深', 645, K], ['3304.22', 670, R, 1], ['10.35', 726, R, 1], ['0.31%', 768, R, 1], ['501.0亿', 815, K], ['创业', 860, K], ['2207.34', 884, G, 1], ['-1.13', 941, G, 1], ['-0.05%', 983, G, 1], ['421.7亿', 1030, K]];
    const dash = ox => { let s = ''; for (let i = 0; i < 6; i++) s += `<rect x="${ox + i * 8.5}" y="12" width="7" height="2" fill="#f00"/><rect x="${ox + i * 8.5}" y="15" width="7" height="2" fill="#f00"/>`; return s; };
    const meter = ox => `<rect x="${ox + .5}" y="4.500" width="49" height="6" fill="#fff" stroke="#ccc"/><rect x="${ox + 11}" y="4" width="13" height="6" fill="#f00"/><rect x="${ox + 25}" y="4" width="11" height="6" fill="#080"/>${dash(ox)}`;
    this.shadowRoot.innerHTML = `<style>
      :host { display: flex; height: 22px; background: #f0f0f0; font: 12.500px/22px ${FONT}; white-space: nowrap; overflow: hidden; }
      span { flex: none; }
      .left { flex: none; width: 33px; background: #fff; display: block; }
      svg { flex: none; display: block; }
      .sep { flex: none; width: 1px; height: 100%; background: #aaa; }
    </style>
    <svg class="left" width="33" height="22"><rect x="-3" y="3" width="14" height="16" rx="2" fill="#c8c8c8"/><path d="M-2 8h11M-2 11h11M-2 14h11" stroke="#f4f4f4"/><rect x="-1" y="2" width="8" height="2" fill="#999"/><path d="M22 7h5v1.500h-5zM21 12h7v1h-7zM21 14h7l-3.500 4z" fill="#000"/></svg>
    ${cellRow(c, 1075)}
    <i class="sep"></i>
    <svg width="107" height="22" style="margin-left:2px" shape-rendering="crispEdges">${meter(0)}${meter(52)}</svg>
    <i class="sep"></i>
    <span style="margin-left:4px">华西<span style="font-size:11px">B41</span></span>`;
  }
}

class TaskBar extends HTMLElement {
  constructor() {
    super();
    this.attachShadow({ mode: 'open' });
    this.shadowRoot.innerHTML = `<style>
      :host { display: flex; position: relative; height: 32px; background: #020912; align-items: center; }
      svg { display: block; flex: none; }
      .tile { width: 48px; height: 32px; background: #36383c; display: flex; align-items: center; justify-content: center; }
      .mark { position: absolute; left: 1524px; top: -5px; width: 132px; text-align: center; font: bold 24px/26px "Liberation Sans", sans-serif; color: #8a8a8a; transform: scaleX(.7); filter: blur(.7px); white-space: nowrap; }
    </style>
    <svg width="16" height="32" style="margin-left:-1px"><path d="M1 13.500l7-1V18H1zM9 12.300l7-1V18H9zM1 19h7v5.500l-7-1zM9 19h7v6.800l-7-1z" fill="#fff"/></svg>
    <svg width="24" height="32" style="margin-left:29px"><path d="M5.500 10.500h12v13h-12z" fill="none" stroke="#fff"/><path d="M2.500 12v10.500M.5 11.500h2M.5 22.500h2M20.500 12v10.500M20.500 11.500h2M20.500 22.500h2" fill="none" stroke="#fff"/></svg>
    <svg width="26" height="32" style="margin-left:26px"><circle cx="12" cy="16" r="9.500" fill="none" stroke="#1f96ee" stroke-width="4.500"/><path d="M11 27a4 4 0 0 1 2-6 4 4 0 0 1 7-1 3.500 3.500 0 0 1 3 6z" fill="#e8f4fc"/></svg>
    <div class="tile" style="margin-left:11px"><svg width="22" height="24"><path d="M1 1h12v3h-3V23H4V4H1z" fill="#c6a468"/><path d="M10 14l10-12V23h-5V17h-5z" fill="#c02020"/><path d="M6 23h4V16h5v-2H6z" fill="#c02020"/></svg></div>
    <div class="mark">178448.COM</div>`;
  }
}

// drawing toolbox, floats over the chip panel
class DrawTools extends HTMLElement {
  constructor() {
    super();
    this.attachShadow({ mode: 'open' });
    const dot = (x, y) => `M${x - 1.5} ${y - 1.5}h3v3h-3z`;
    const p = (d, extra = '') => `<path d="${d}" ${extra}/>`;
    const t = (s, size = 9, y = 10, x = 10) => `<text x="${x}" y="${y}" font-size="${size}" text-anchor="middle" fill="#a6a6a6" stroke="none" dominant-baseline="central">${s}</text>`;
    const lines = 'M3 14h14M3 17h14';
    const hatch = 'M3 5L17 2M3 10L17 7M3 15L17 12M3 18L17 15M3 5V18M17 2V15';
    const icons = [
      p('M5 2v13l3-3 2.500 5 2-1-2.500-5H14z'), p('M4 15L15 5') + p(dot(4, 15) + dot(15, 5), 'fill="#a6a6a6"'), p('M3 17L17 3') + p(dot(6, 14) + dot(14, 6), 'fill="#a6a6a6"'), p('M4 16L16 4M10 4h6v6') + p(dot(4, 16), 'fill="#a6a6a6"'),
      p('M3 17L17 3') + p(dot(4, 16) + dot(16, 4), 'fill="#a6a6a6"'), p('M3 10h14') + p(dot(10, 10), 'fill="#a6a6a6"'), p('M3 10h14') + p(dot(6, 10), 'fill="#a6a6a6"'), p('M3 10h14') + p(dot(4, 10) + dot(16, 10), 'fill="#a6a6a6"'),
      p('M10 2v16') + p(dot(10, 10) + dot(10, 12), 'fill="#a6a6a6"'), t('123', 9, 8) + p('M3 16h14') + p(dot(5, 16), 'fill="#a6a6a6"'), p('M2 14L13 3M5 17L17 5M8 18L18 8') + p(dot(6, 10) + dot(10, 11), 'fill="#a6a6a6"'), p('M3 14L15 3M5 17L17 5') + p(dot(7, 15) + dot(13, 9), 'fill="#a6a6a6"'),
      p('M3 13L11 5M8 16L17 7') + p(dot(5, 15) + dot(14, 4), 'fill="#a6a6a6"'), p('M8 4a6.500 6.500 0 0 1 0 13') + p(dot(8, 4) + dot(8, 17), 'fill="#a6a6a6"'), p('M17 10a7 7 0 1 1 -14 0a7 7 0 1 1 14 0M10 10L14 5') + p(dot(10, 11), 'fill="#a6a6a6"'), p('M17 10a7 7 0 1 1 -14 0a7 7 0 1 1 14 0M4 7L16 7L11 16z'),
      p('M3 3L6 17L10 5L14 17L17 3'), p('M2 17L5 10L7 14L10 5L13 14L15 10L18 17'), p('M2 17L6 11L9 14L13 7L14 10L18 3'), p('M2 3L7 15L10 7L17 17'),
      p('M2 18L5 11L7 13L10 4L13 10L15 8L18 15'), t('GP', 9, 6) + p('M3 1h14' + lines), t('GA', 9, 6) + p('M3 1h14' + lines), t('G', 9, 6, 7) + p('M3 1h14' + lines),
      t('%', 8, 7, 5) + p('M3 3h14M9 7h8M9 10h8' + lines), t('T', 9, 6, 7) + p('M3 2h14M11 6h6M11 9h6' + lines), p(hatch), p(hatch + 'M10 2V18M17 2L10 8'),
      p('M3 2V18M17 2V18M3 15L17 8'), p('M4 3v14M8 3v14M12 3v14M16 3v14'), p('M4 3v14M7 3v14M13 3v14M16 3v14'), p('M3 3v14M6 3v14M17 3v14') + t('G', 8, 7, 12),
      p('M2 3v14M5 3v14M8 3v14M11 3v14M14 3v14M17 3v14'), p('M3 3v14M7 3v14M8 3v14M9 3v14M12 3v14M17 3v14M11 3v14'), p('M2 3v14M6 3v14M9 3v14M12 3v14M14 3v14M18 3v14'), p('M2 17L18 5M2 17L18 9M2 17L18 13M2 17H18'),
      p('M3 3V17H18M3 17L11 3M3 17L15 6M3 17L18 11'), p('M10 4V17M4 11L10 17L16 11'), p('M3 5L17 3L11 17z'), p('M3 5h14v11h-14z'),
      p('M10 4L15 10H12V16H8V10H5z', 'fill="#a6a6a6"'), p('M10 16L15 10H12V4H8V10H5z', 'fill="#a6a6a6"'), p('M2 18L16 4') + p('M6 13L11 8L17 13z', 'fill="#a6a6a6"'), t('A', 15, 11),
      t('+', 9, 5, 4) + t('A', 14, 11, 12), p('M3 3h14v14h-14z') + p('M6 6h8v8h-8z', 'fill="#a6a6a6"'), p('M4 4L16 16M16 4L4 16', 'stroke-width="1.500"'), p('M3 10h7v8H3zM3 18L15 6') + `<circle cx="15" cy="6" r="4" fill="#a6a6a6"/>`,
      `<rect x="2.500" y="2.500" width="15" height="15" fill="#fff" stroke="#000"/><path d="M5 6h10M5 9h10M5 12h10M5 15h10" stroke="#00f"/>`, p('M2 7h16v6H2zM5 7v3M8 7v3M11 7v3M14 7v3'), `<rect x="2.500" y="3.500" width="15" height="13" fill="#fff" stroke="#222"/><rect x="4" y="5" width="6" height="6" fill="#168"/><path d="M11 6h5M11 9h5M5 13h10" stroke="#000"/>`, '',
      t('上', 15), t('下', 15), `<path d="M10 3l3 3H7z" fill="#e00"/><path d="M5 9l5-4 5 4z" fill="#f00"/><path d="M6 12l4-3 4 3z" fill="#ee0"/><path d="M5 16l5-4 5 4z" fill="#080"/><rect x="8" y="15" width="4" height="2" fill="#080"/>`, '',
      t('买', 15), t('卖', 15), t('平', 15), ''
    ];
    this.shadowRoot.innerHTML = `<style>
      :host { position: absolute; left: 1552px; top: 13px; width: 92px; height: 361px; background: #eee; box-sizing: border-box; border-top: 1px solid #3a80c8; font-family: ${FONT}; }
      header { display: flex; height: 30px; background: #fff; align-items: center; justify-content: space-between; padding-left: 8px; font-size: 12.500px; color: #222; }
      header span { margin-top: -3px; }
      header b { width: 19px; height: 19px; margin-right: 1px; background: #c75050; color: #fff; font: bold 11px/18px ${FONT}; text-align: center; }
      .grid { display: grid; grid-template-columns: repeat(4, 22.700px); grid-auto-rows: 22px; }
      svg { width: 20px; height: 20px; margin: 1px; stroke: #a6a6a6; fill: none; shape-rendering: crispEdges; }
    </style>
    <header><span>画线工具</span><b>x</b></header>
    <div class="grid">${icons.map(i => `<svg viewBox="0 0 20 20">${i}</svg>`).join('')}</div>`;
  }
}

customElements.define('lg-i', LegendItem);
customElements.define('chart-pane', ChartPane);
customElements.define('tdx-app', TdxApp);
customElements.define('menu-strip', MenuStrip);
customElements.define('tab-strip', TabStrip);
customElements.define('work-area', WorkArea);
customElements.define('time-axis', TimeAxis);
customElements.define('formula-tabs', FormulaTabs);
customElements.define('chip-panel', ChipPanel);
customElements.define('quote-card', QuoteCard);
customElements.define('stock-list', StockList);
customElements.define('hold-tab', HoldTab);
customElements.define('ticker-strip', TickerStrip);
customElements.define('status-strip', StatusStrip);
customElements.define('task-bar', TaskBar);
customElements.define('draw-tools', DrawTools);
</script>
</body>
</html>
